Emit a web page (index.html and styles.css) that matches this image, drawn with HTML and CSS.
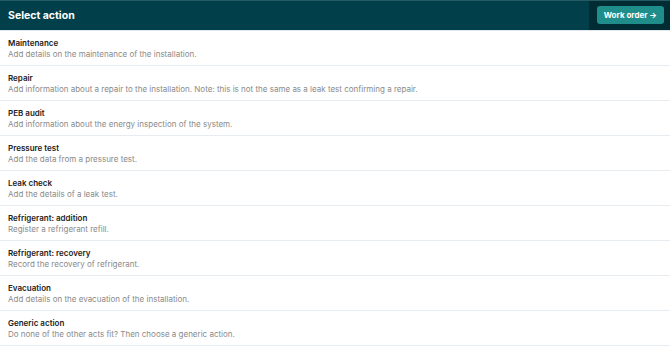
FILE: index.html
```html
<!DOCTYPE html>
<html lang="en">
<head>
  <meta charset="UTF-8">
  <title>Select action</title>
  <link rel="stylesheet" href="styles.css">
</head>
<body>
  <div class="header">
    <h2>Select action</h2>
    <div class="header-side">
      <button class="work-order">Work order &rarr;</button>
    </div>
  </div>

  <ul class="actions">
    <li>
      <div class="action-title">Maintenance</div>
      <div class="action-desc">Add details on the maintenance of the installation.</div>
    </li>
    <li>
      <div class="action-title">Repair</div>
      <div class="action-desc">Add information about a repair to the installation. Note: this is not the same as a leak test confirming a repair.</div>
    </li>
    <li>
      <div class="action-title">PEB audit</div>
      <div class="action-desc">Add information about the energy inspection of the system.</div>
    </li>
    <li>
      <div class="action-title">Pressure test</div>
      <div class="action-desc">Add the data from a pressure test.</div>
    </li>
    <li>
      <div class="action-title">Leak check</div>
      <div class="action-desc">Add the details of a leak test.</div>
    </li>
    <li>
      <div class="action-title">Refrigerant: addition</div>
      <div class="action-desc">Register a refrigerant refill.</div>
    </li>
    <li>
      <div class="action-title">Refrigerant: recovery</div>
      <div class="action-desc">Record the recovery of refrigerant.</div>
    </li>
    <li>
      <div class="action-title">Evacuation</div>
      <div class="action-desc">Add details on the evacuation of the installation.</div>
    </li>
    <li>
      <div class="action-title">Generic action</div>
      <div class="action-desc">Do none of the other acts fit? Then choose a generic action.</div>
    </li>
  </ul>
</body>
</html>
```

FILE: styles.css
```css
body {
  font-family: Inter, "Noto Sans", sans-serif;
  margin: 0;
  background: #fff;
}
.header {
  display: flex;
  justify-content: space-between;
  height: 30px;
  background-color: #013f4a;
  border-top: 1px solid #255a63;
  box-sizing: border-box;
}
.header h2 {
  margin: 0;
  padding-left: 8px;
  font-size: 10.5px;
  font-weight: 700;
  line-height: 29px;
  color: #fff;
}
.header-side {
  display: flex;
  align-items: center;
  padding: 0 6px 0 8px;
  background-color: #022c33;
}
.work-order {
  font-family: Inter, "Noto Sans", sans-serif;
  font-size: 8px;
  font-weight: 700;
  color: #fff;
  background-color: #1f8e8a;
  border: none;
  border-radius: 3px;
  height: 18px;
  padding: 0 7px;
  margin-top: -1px;
}
.actions {
  list-style: none;
  margin: 0;
  padding: 0;
  border-top: 1px solid #e2e8ec;
}
.actions li {
  padding: 7px 8px 5px;
  border-bottom: 1px solid #e6ecf0;
}
.action-title {
  font-size: 8px;
  font-weight: 600;
  line-height: 11px;
  color: #222;
}
.action-desc {
  font-size: 8px;
  line-height: 11px;
  color: #8a8a8a;
}
```
